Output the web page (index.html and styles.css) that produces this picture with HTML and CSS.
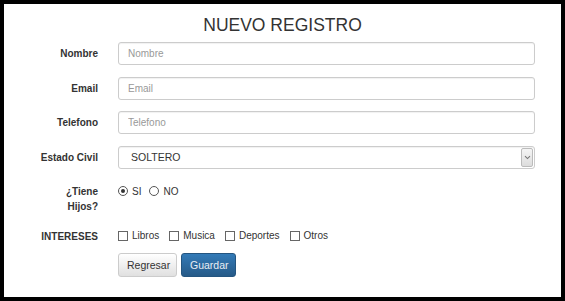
FILE: index.html
```html
<!DOCTYPE html>
<html lang="es">
  <head>
    <meta charset="UTF-8" />
    <meta name="viewport" content="width=device-width, initial-scale=1.0" />
    <title>Nuevo Registro</title>
    <link rel="stylesheet" href="styles.css">
  </head>
  <body>
    <div class="frame">
      <h1 class="title">NUEVO REGISTRO</h1>

      <form class="form">
        <div class="row">
          <label class="label" for="nombre">Nombre</label>
          <input class="field" id="nombre" type="text" placeholder="Nombre" />
        </div>
        <div class="row">
          <label class="label" for="email">Email</label>
          <input class="field" id="email" type="text" placeholder="Email" />
        </div>
        <div class="row">
          <label class="label" for="telefono">Telefono</label>
          <input class="field" id="telefono" type="text" placeholder="Telefono" />
        </div>
        <div class="row row-select">
          <label class="label">Estado Civil</label>
          <div class="select">
            <span>SOLTERO</span>
            <span class="select-arrow">
              <svg width="7" height="5" viewBox="0 0 7 5">
                <path d="M1 1.2 L3.5 3.6 L6 1.2" fill="none" stroke="#777" stroke-width="1.1" />
              </svg>
            </span>
          </div>
        </div>
        <div class="row row-radio">
          <span class="label">¿Tiene Hijos?</span>
          <div class="options">
            <label class="option"><input class="radio" type="radio" name="hijos" checked />SI</label>
            <label class="option"><input class="radio" type="radio" name="hijos" />NO</label>
          </div>
        </div>
        <div class="row row-check">
          <span class="label">INTERESES</span>
          <div class="options options-wide">
            <label class="option"><input class="check" type="checkbox" />Libros</label>
            <label class="option"><input class="check" type="checkbox" />Musica</label>
            <label class="option"><input class="check" type="checkbox" />Deportes</label>
            <label class="option"><input class="check" type="checkbox" />Otros</label>
          </div>
        </div>
        <div class="row row-actions">
          <span></span>
          <div class="actions">
            <button type="button" class="btn btn-default">Regresar</button>
            <button type="button" class="btn btn-primary">Guardar</button>
          </div>
        </div>
      </form>
    </div>
  </body>
</html>
```

FILE: styles.css
```css
body {
  margin: 0;
  font-family: "Liberation Sans", Arial, sans-serif;
  color: #333;
}

.frame {
  width: 565px;
  height: 301px;
  box-sizing: border-box;
  border: 4px solid #000;
  background: #fff;
}

.title {
  margin: 11px 0 7px;
  font-size: 17.5px;
  line-height: 20px;
  font-weight: normal;
  text-align: center;
  color: #333;
}

.form {
  padding: 0 26px 0 34px;
}

.row {
  display: grid;
  grid-template-columns: 60px 1fr;
  column-gap: 20px;
  align-items: center;
  margin-bottom: 11.5px;
}

.label {
  font-size: 10px;
  font-weight: bold;
  line-height: 15px;
  text-align: right;
  color: #333;
}

.field,
.select {
  height: 23px;
  box-sizing: border-box;
  border: 1px solid #ccc;
  border-radius: 3px;
  box-shadow: inset 0 1px 1px rgba(0, 0, 0, 0.06);
  font-family: inherit;
  font-size: 10px;
  color: #555;
}

.field {
  width: 100%;
  padding: 0 9px;
  outline: none;
}

.field::placeholder {
  color: #999;
}

.row-select {
  margin-bottom: 15px;
}

.select {
  display: flex;
  align-items: center;
  justify-content: space-between;
  padding: 0 1px 0 12px;
  font-size: 10.5px;
  color: #333;
}

.select-arrow {
  width: 12px;
  height: 19px;
  box-sizing: border-box;
  border: 1px solid #bbb;
  border-radius: 2px;
  background: linear-gradient(#f5f5f5, #dcdcdc);
  display: flex;
  align-items: center;
  justify-content: center;
}

.row-radio {
  align-items: start;
  margin-bottom: 14.5px;
}

.row-check {
  margin-bottom: 9px;
}

.options {
  display: flex;
  gap: 8px;
  line-height: 15px;
  font-size: 10px;
  color: #333;
}

.options-wide {
  gap: 10px;
  line-height: 16px;
}

.option {
  display: flex;
  align-items: center;
  gap: 4px;
}

.radio,
.check {
  appearance: none;
  margin: 0;
  width: 10px;
  height: 10px;
  box-sizing: border-box;
  border: 1px solid #555;
  background: #fff;
}

.radio {
  border-radius: 50%;
  position: relative;
}

.radio:checked::after {
  content: "";
  position: absolute;
  left: 2px;
  top: 2px;
  width: 4px;
  height: 4px;
  border-radius: 50%;
  background: #333;
}

.check {
  border-color: #666;
}

.actions {
  display: flex;
  gap: 4px;
}

.btn {
  height: 23.5px;
  padding: 0 8px;
  border-radius: 3px;
  font-family: inherit;
  font-size: 10.5px;
  cursor: pointer;
}

.btn-default {
  width: 59px;
  border: 1px solid #ccc;
  background: linear-gradient(#fff, #e0e0e0);
  color: #333;
}

.btn-primary {
  width: 55px;
  border: 1px solid #245580;
  background: linear-gradient(#337ab7, #265a88);
  color: #e8eef5;
}
```
